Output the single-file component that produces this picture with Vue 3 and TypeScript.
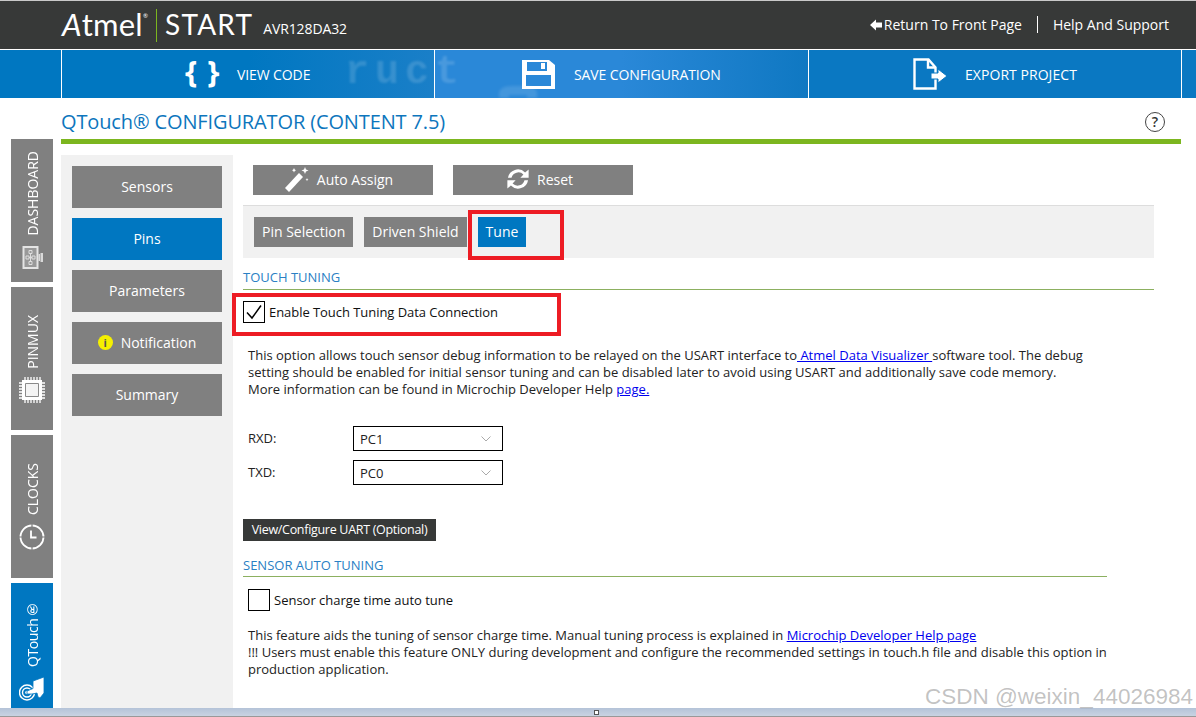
<script setup lang="ts">
const railTabs = [
  { label: "DASHBOARD", kind: "dash", cls: "tab-dash" },
  { label: "PINMUX", kind: "chip", cls: "tab-pin" },
  { label: "CLOCKS", kind: "clock", cls: "tab-clock" },
  { label: "QTouch®", kind: "touch", cls: "tab-touch active" },
];

const sideItems = ["Sensors", "Pins", "Parameters", "Notification", "Summary"];
const pins = [
  { name: "RXD:", value: "PC1" },
  { name: "TXD:", value: "PC0" },
];
</script>

<template>
  <div class="page">
    <header class="topbar">
      <span class="atmel"><em>A</em>tmel<sup>®</sup></span>
      <span class="logo-sep"></span>
      <span class="start">START</span>
      <span class="device">AVR128DA32</span>
      <nav class="top-links">
        <a class="back">
          <svg width="12" height="12" viewBox="0 0 12 12"><path d="M0 6 6 .5V3.600h6v4.800H6v3.100z" fill="#fff" /></svg>
          Return To Front Page
        </a>
        <span class="link-sep"></span>
        <a>Help And Support</a>
      </nav>
    </header>

    <div class="actions">
      <div class="cell spacer"></div>
      <div class="cell code">
        <span class="braces">{ }</span>
        <span>VIEW CODE</span>
      </div>
      <div class="cell save">
        <svg width="33" height="29" viewBox="0 0 33 29">
          <path d="M0 0h27l6 5v24H0z" fill="#fff" />
          <path d="M5 2h20v9H5z" fill="#2a88d8" />
          <path d="M19 3h4v6h-4z" fill="#fff" />
          <path d="M4 15h25v11H4z" fill="#2a88d8" />
        </svg>
        <span>SAVE CONFIGURATION</span>
      </div>
      <div class="cell export">
        <svg width="34" height="32" viewBox="0 0 34 32">
          <path d="M1.500 1.500h14l7 8v21h-21z" fill="none" stroke="#fff" stroke-width="2.400" />
          <path d="M15 1.500v8h7.500" fill="none" stroke="#fff" stroke-width="2.400" />
          <path d="M18 15h7v-4l9 7-9 7v-4h-7z" fill="#fff" stroke="#0a78c2" stroke-width="1" />
        </svg>
        <span>EXPORT PROJECT</span>
      </div>
      <div class="cell tail"></div>
      <div class="ghost" aria-hidden="true">ruct</div>
      <svg class="ghost-blob" width="50" height="14" viewBox="0 0 50 14" aria-hidden="true">
        <path d="M4 14V8q2-6 12-6h14q10 0 12 6v6h-10v-3H14v3z" fill="rgba(255,255,255,.12)" />
      </svg>
    </div>

    <div class="title-row">
      <h1>QTouch® CONFIGURATOR (CONTENT 7.5)</h1>
      <span class="help">?</span>
    </div>

    <div class="workspace">
      <aside class="rail">
        <div v-for="tab in railTabs" :key="tab.label" class="rail-tab" :class="tab.cls">
          <span class="rail-label">{{ tab.label }}</span>
          <svg v-if="tab.kind === 'dash'" width="24" height="23" viewBox="0 0 24 23">
            <path d="M3.500 1h14v21h-14z" fill="#999" stroke="#e4e4e4" stroke-width="2" />
            <path d="M18.500 8h1.500v7h-1.500zM20.500 7H23v9h-2.500z" fill="#d9d9d9" />
            <path d="M9 4.500h3v3H9zM6 10h3v3H6zM12 10h3v3h-3zM9 15.500h3v3H9z" fill="none" stroke="#ddd" />
            <path d="M10.500 7.500v8M9 11.500h3" stroke="#ddd" fill="none" />
          </svg>
          <svg v-else-if="tab.kind === 'chip'" width="26" height="26" viewBox="0 0 26 26">
            <path d="M3 3h20v20H3z" fill="#fff" />
            <path d="M6.500 6.500h13v13h-13z" fill="#f4f4f4" stroke="#8a8a8a" />
            <path d="M6 0v3M9 0v3M12 0v3M15 0v3M18 0v3M21 0v3M6 23v3M9 23v3M12 23v3M15 23v3M18 23v3M21 23v3M0 6h3M0 9h3M0 12h3M0 15h3M0 18h3M0 21h3M23 6h3M23 9h3M23 12h3M23 15h3M23 18h3M23 21h3" stroke="#fff" stroke-width="1.300" />
          </svg>
          <svg v-else-if="tab.kind === 'clock'" width="26" height="26" viewBox="0 0 26 26">
            <circle cx="13" cy="13" r="11.500" fill="none" stroke="#fff" stroke-width="1.800" />
            <path d="M13 0v4M13 22v4M0 13h4M22 13h4" stroke="#808080" stroke-width="1.200" />
            <path d="M12 6.500v7h5.500" fill="none" stroke="#fff" stroke-width="1.800" />
          </svg>
          <svg v-else width="26" height="26" viewBox="0 0 26 26">
            <circle cx="8" cy="16.500" r="7.500" fill="none" stroke="#fff" stroke-width="1.400" />
            <circle cx="8" cy="16.500" r="4.500" fill="none" stroke="#fff" stroke-width="1.400" />
            <circle cx="8" cy="16.500" r="1.800" fill="#fff" />
            <path d="M8 15l6-2.500V5L25 1v16l-4 5-2-1-1-4-5 1H8z" fill="#fff" stroke="#0077c1" stroke-width=".8" />
          </svg>
        </div>
      </aside>

      <aside class="side">
        <button v-for="item in sideItems" :key="item" class="side-btn" :class="{ on: item === 'Pins' }">
          <span v-if="item === 'Notification'" class="info">i</span>{{ item }}
        </button>
      </aside>

      <main class="content">
        <div class="tools">
          <button class="tool">
            <svg width="24" height="25" viewBox="0 0 24 25">
              <path d="M0 21 14 6l4 4L4 25z" fill="#fff" />
              <path d="M20 0l1 2.500L23.500 3.500 21 4.500 20 7l-1-2.500L16.500 3.500 19 2.500zM9 1l.7 1.600L11 3.300l-1.300.7L9 5.500 8.300 4 7 3.300l1.300-.7zM22 11l.5 1.200 1 .4-1 .5-.5 1.200-.5-1.200-1-.5 1-.4z" fill="#fff" />
            </svg>
            Auto Assign
          </button>
          <button class="tool">
            <svg class="reset-icon" width="26" height="24" viewBox="0 0 22 20">
              <path d="M2.500 9A8.500 8.500 0 0 1 17 4.500L20 2v7h-7l2.600-2.800A6 6 0 0 0 5.500 9z" fill="#fff" />
              <path d="M19.500 11A8.500 8.500 0 0 1 5 15.500L2 18v-7h7l-2.600 2.800A6 6 0 0 0 16.500 11z" fill="#fff" />
            </svg>
            Reset
          </button>
        </div>

        <div class="subtabs">
          <button class="subtab">Pin Selection</button>
          <button class="subtab">Driven Shield</button>
          <button class="subtab on">Tune</button>
        </div>

        <h2 class="section wide">TOUCH TUNING</h2>
        <label class="check first">
          <span class="box">
            <svg width="18" height="16" viewBox="0 0 18 16"><path d="M2 8.500 7 14 16 1.500" fill="none" stroke="#000" stroke-width="1.500" /></svg>
          </span>
          Enable Touch Tuning Data Connection
        </label>

        <p class="copy">
          This option allows touch sensor debug information to be relayed on the USART interface to<a> Atmel Data Visualizer </a>software tool. The debug<br />
          setting should be enabled for initial sensor tuning and can be disabled later to avoid using USART and additionally save code memory.<br />
          More information can be found in Microchip Developer Help <a>page.</a>
        </p>

        <div class="pins">
          <div v-for="pin in pins" :key="pin.name" class="pin-row">
            <span class="pin-name">{{ pin.name }}</span>
            <div class="select">
              {{ pin.value }}
              <svg width="10" height="6" viewBox="0 0 10 6"><path d="M.5.500 5 5 9.500.500" fill="none" stroke="#aaa" /></svg>
            </div>
          </div>
        </div>

        <button class="uart">View/Configure UART (Optional)</button>

        <h2 class="section narrow">SENSOR AUTO TUNING</h2>
        <label class="check second">
          <span class="box"></span>
          Sensor charge time auto tune
        </label>

        <p class="copy feature">
          This feature aids the tuning of sensor charge time. Manual tuning process is explained in <a>Microchip Developer Help page</a><br />
          !!! Users must enable this feature ONLY during development and configure the recommended settings in touch.h file and disable this option in<br />
          production application.
        </p>

        <div class="mark mark-tune"></div>
        <div class="mark mark-enable"></div>
      </main>
    </div>

    <footer class="window-edge"><i></i></footer>
    <div class="watermark">CSDN @weixin_44026984</div>
  </div>
</template>

<style>
html,
body {
  margin: 0;
  background: #fff;
}
</style>

<style scoped>
.page {
  position: relative;
  width: 1196px;
  height: 717px;
  overflow: hidden;
  background: #fff;
  font-family: "Open Sans", "DejaVu Sans", sans-serif;
  font-size: 13px;
  color: #222;
}
button {
  font-family: inherit;
  border: 0;
  padding: 0 0 2px;
  box-sizing: border-box;
  color: #fff;
}
.topbar {
  height: 48px;
  border-top: 1px solid #c9c9c9;
  background: #373938;
  color: #fff;
  display: flex;
  align-items: center;
  padding-left: 62px;
}
.atmel {
  font-family: Lato, sans-serif;
  font-weight: 400;
  font-size: 31px;
  width: 94px;
  letter-spacing: 0.2px;
  margin-top: -2px;
}
.atmel em {
  font-style: italic;
}
.atmel sup {
  font-size: 6px;
  vertical-align: 18px;
}
.logo-sep {
  width: 1px;
  height: 33px;
  background: #7cb61f;
}
.start {
  font-family: Lato, sans-serif;
  font-weight: 400;
  font-size: 28px;
  margin-left: 8px;
  letter-spacing: 1.2px;
  margin-top: -2px;
}
.device {
  font-size: 14px;
  margin-left: 10px;
  margin-top: 7px;
  letter-spacing: -0.1px;
}
.top-links {
  margin-left: auto;
  margin-right: 27px;
  margin-top: -2px;
  display: flex;
  align-items: center;
  font-size: 14px;
}
.back svg {
  vertical-align: -1px;
  margin-right: -2px;
}
.link-sep {
  width: 1px;
  height: 17px;
  background: #fff;
  margin: 0 15px;
}
.actions {
  position: relative;
  height: 48px;
  border-top: 1px solid #fff;
  display: grid;
  grid-template-columns: 62px 373px 374px 373px 1fr;
  background: #0a78c2;
  overflow: hidden;
}
.cell {
  display: flex;
  align-items: center;
  color: #fff;
  font-size: 14px;
  letter-spacing: -0.1px;
  border-right: 1px solid #fff;
  box-sizing: border-box;
}
.tail {
  border-right: 0;
}
.spacer {
  background: #0077c1;
}
.code {
  padding-left: 123px;
  gap: 19px;
  background: linear-gradient(90deg, #0077c1 50%, #1a7fc8 100%);
}
.braces {
  width: 33px;
  white-space: nowrap;
  font-size: 31px;
  font-weight: 700;
  letter-spacing: 1px;
  text-align: center;
  line-height: 1;
  margin-top: -5px;
}
.save {
  padding-left: 87px;
  gap: 19px;
  background: linear-gradient(90deg, #2a88d8 0%, #2a88d8 50%, #0f78c2 100%);
}
.ghost {
  position: absolute;
  left: 345px;
  top: 0;
  line-height: 45px;
  font-family: "Liberation Mono", monospace;
  font-size: 40px;
  font-weight: 700;
  letter-spacing: 6px;
  color: rgba(255, 255, 255, 0.15);
  filter: blur(1.2px);
  pointer-events: none;
}
.ghost-blob {
  position: absolute;
  left: 495px;
  top: 34px;
  filter: blur(1.5px);
}
.export {
  padding-left: 104px;
  gap: 18px;
  letter-spacing: 0.05px;
}
.title-row {
  height: 46px;
  margin-left: 61px;
  width: 1120px;
  box-sizing: border-box;
  border-bottom: 5px solid #7cb61f;
  display: flex;
  align-items: center;
  justify-content: space-between;
}
h1 {
  margin: 0;
  font-weight: 400;
  font-size: 20px;
  letter-spacing: -0.13px;
  color: #0d76bd;
  position: relative;
  top: 3px;
}
.help {
  width: 18px;
  height: 18px;
  border: 1.5px solid #444;
  border-radius: 50%;
  margin-right: 16px;
  margin-top: 6px;
  font-size: 14px;
  font-weight: 600;
  line-height: 18px;
  text-align: center;
  color: #333;
}
.workspace {
  height: 569px;
  display: flex;
  align-items: flex-start;
  margin-top: -5px;
}
.rail {
  width: 42px;
  margin-left: 11px;
  display: flex;
  flex-direction: column;
  gap: 5px;
}
.rail-tab {
  height: 143px;
  box-sizing: border-box;
  background: #808080;
  color: #fff;
  display: flex;
  flex-direction: column;
  align-items: center;
  justify-content: flex-end;
  font-size: 14px;
}
.rail-tab.active {
  height: 125px;
  background: #0077c1;
}
.rail-label {
  writing-mode: vertical-rl;
  transform: rotate(180deg);
  line-height: 20px;
  white-space: nowrap;
  margin-left: 2px;
}
.tab-dash {
  padding-bottom: 13px;
  gap: 10px;
}
.tab-pin {
  padding-bottom: 27px;
  gap: 8px;
}
.tab-clock {
  padding-bottom: 28px;
  gap: 9px;
}
.tab-touch {
  padding-bottom: 6px;
  gap: 9px;
}
.tab-touch .rail-label {
  letter-spacing: -0.4px;
}
.side {
  margin-left: 8px;
  margin-top: 16px;
  width: 172px;
  height: 553px;
  box-sizing: border-box;
  background: #f1f1f1;
  padding: 11px;
  display: flex;
  flex-direction: column;
  gap: 10px;
}
.side-btn {
  width: 150px;
  height: 42px;
  flex: none;
  background: #808080;
  font-size: 14px;
}
.side-btn.on {
  background: #0077c1;
}
.info {
  display: inline-block;
  width: 15px;
  height: 15px;
  border-radius: 50%;
  background: #f5f000;
  color: #555;
  font-size: 11px;
  font-weight: 700;
  line-height: 15px;
  margin-right: 8px;
  vertical-align: 1px;
}
.content {
  position: relative;
  width: 911px;
  margin-left: 10px;
  margin-top: 26px;
}
.tools {
  display: flex;
  gap: 20px;
  padding-left: 10px;
}
.tool {
  width: 180px;
  height: 30px;
  padding: 0 8px 2px 0;
  background: #808080;
  font-size: 14px;
  display: flex;
  align-items: center;
  justify-content: center;
  gap: 8px;
}
.reset-icon {
  margin-right: -2px;
}
.subtabs {
  margin-top: 10px;
  height: 53px;
  box-sizing: border-box;
  background: #f1f1f1;
  border-top: 1px solid #ddd;
  padding: 11px;
  display: flex;
  gap: 11px;
}
.subtab {
  height: 30px;
  padding: 0 8px 2px;
  background: #808080;
  font-size: 14px;
}
.subtab.on {
  background: #0077c1;
}
.section {
  margin: 0;
  font-weight: 400;
  font-size: 13px;
  line-height: 17px;
  color: #2a80c4;
  border-bottom: 1px solid #8cb060;
  padding-bottom: 3px;
}
.section.wide {
  margin-top: 11px;
}
.section.narrow {
  margin-top: 16px;
  padding-bottom: 2px;
  width: 864px;
}
.check {
  display: flex;
  align-items: center;
  gap: 4px;
  color: #111;
}
.check.first {
  margin-top: 11px;
  letter-spacing: -0.05px;
}
.check.second {
  margin-top: 12px;
  margin-left: 5px;
}
.box {
  width: 20px;
  height: 20px;
  border: 1px solid #000;
  display: flex;
  align-items: center;
  justify-content: center;
}
.copy {
  margin: 24px 0 0 5px;
  line-height: 17px;
  white-space: nowrap;
  color: #222;
}
.copy a {
  color: #0000ee;
  text-decoration: underline;
}
.copy.feature {
  margin-top: 16px;
}
.pins {
  margin-top: 28px;
  display: flex;
  flex-direction: column;
  gap: 9px;
}
.pin-row {
  display: flex;
  align-items: center;
  padding-left: 5px;
}
.pin-name {
  width: 105px;
  margin-top: -2px;
}
.select {
  width: 150px;
  height: 25px;
  box-sizing: border-box;
  border: 1px solid #000;
  padding: 0 11px 0 6px;
  display: flex;
  align-items: center;
  justify-content: space-between;
}
.uart {
  display: block;
  margin-top: 34px;
  width: 193px;
  height: 22px;
  background: #373938;
  font-size: 12.5px;
  letter-spacing: -0.3px;
}
.mark {
  position: absolute;
  box-sizing: border-box;
  border: 4px solid #ed1c24;
  pointer-events: none;
}
.mark-tune {
  left: 225px;
  top: 45px;
  width: 96px;
  height: 50px;
}
.mark-enable {
  left: -11px;
  top: 128px;
  width: 329px;
  height: 43px;
}
.window-edge {
  position: absolute;
  left: 0;
  right: 0;
  bottom: 0;
  height: 9px;
  box-sizing: border-box;
  background: linear-gradient(#b4c3d8, #c9d3e2);
  border-bottom: 1px solid #999;
}
.window-edge i {
  position: absolute;
  left: 594px;
  top: 2px;
  width: 3px;
  height: 3px;
  background: #fff;
  border: 1px solid #555;
}
.watermark {
  position: absolute;
  left: 925px;
  top: 684px;
  font-family: "Liberation Sans", sans-serif;
  font-size: 22.5px;
  color: rgba(120, 120, 120, 0.45);
}
</style>
